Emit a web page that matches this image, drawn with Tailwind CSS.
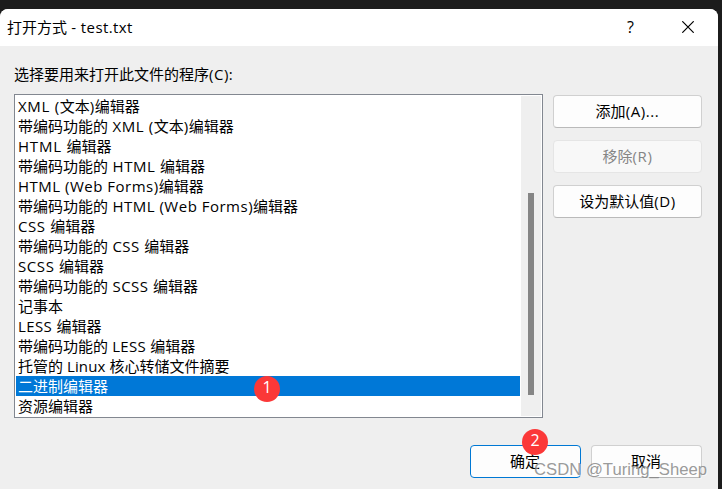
<!DOCTYPE html>
<html lang="zh-CN">
<head>
  <meta charset="UTF-8" />
  <meta name="viewport" content="width=device-width, initial-scale=1.0" />
  <title>打开方式 - test.txt</title>
  <script src="https://cdn.jsdelivr.net/npm/@tailwindcss/browser@4"></script>
</head>
<body class="h-[489px] overflow-hidden bg-[#1c1c1c] pt-[9px] pr-[4px] font-['Open_Sans','Noto_Sans_CJK_SC',sans-serif] text-[15px] leading-5 text-black">
  <div class="flex h-[480px] flex-col overflow-hidden rounded-t-lg bg-[#efefef]">

    <!-- 标题栏 -->
    <div class="flex h-[37px] shrink-0 items-center bg-white pr-0.5 pb-px pl-[7px]">
      <h1 class="flex-1 whitespace-nowrap">打开方式<span class="tracking-[.4px]"> - test.txt</span></h1>
      <button class="flex h-full w-[57px] items-center justify-center text-base">?</button>
      <button class="flex h-full w-[57px] items-center justify-center">
        <svg class="h-3 w-3" viewBox="0 0 12 12" fill="none" stroke="#000" stroke-width="1.2"><path d="M.3.3l11.4 11.4M11.7.3L.3 11.7" /></svg>
      </button>
    </div>

    <p class="mt-[18px] ml-[14px] whitespace-nowrap">选择要用来打开此文件的程序<span class="tracking-[.5px]">(C):</span></p>

    <div class="mt-[10px] flex gap-[10px] pl-[14px]">
      <!-- 程序列表 -->
      <div class="flex h-[324px] w-[529px] border border-[#828790] bg-white p-px">
        <ul id="list" class="w-[504px] whitespace-nowrap">
          <li class="h-5 pl-0.5"><span class="tracking-[.7px]">XML (</span>文本<span class="tracking-[.5px]">)</span>编辑器</li>
          <li class="h-5 pl-0.5">带编码功能的<span class="tracking-[.6px]"> XML (</span>文本<span class="tracking-[.5px]">)</span>编辑器</li>
          <li class="h-5 pl-0.5"><span class="tracking-[.8px]">HTML </span>编辑器</li>
          <li class="h-5 pl-0.5">带编码功能的<span class="tracking-[.6px]"> HTML </span>编辑器</li>
          <li class="h-5 pl-0.5"><span class="tracking-[.5px]">HTML (Web Forms)</span>编辑器</li>
          <li class="h-5 pl-0.5">带编码功能的<span class="tracking-[.5px]"> HTML (Web Forms)</span>编辑器</li>
          <li class="h-5 pl-0.5"><span class="tracking-[.6px]">CSS </span>编辑器</li>
          <li class="h-5 pl-0.5">带编码功能的<span class="tracking-[.5px]"> CSS </span>编辑器</li>
          <li class="h-5 pl-0.5"><span class="tracking-[.6px]">SCSS </span>编辑器</li>
          <li class="h-5 pl-0.5">带编码功能的<span class="tracking-[.5px]"> SCSS </span>编辑器</li>
          <li class="h-5 pl-0.5">记事本</li>
          <li class="h-5 pl-0.5"><span class="tracking-[.4px]">LESS </span>编辑器</li>
          <li class="h-5 pl-0.5">带编码功能的<span class="tracking-[.3px]"> LESS </span>编辑器</li>
          <li class="h-5 pl-0.5">托管的<span class="tracking-[.1px]"> Linux </span>核心转储文件摘要</li>
          <li class="relative h-5 bg-[#0078d7] pl-0.5 text-white">二进制编辑器
            <span class="absolute top-0 left-[238px] flex h-[26px] w-[26px] items-center justify-center rounded-full bg-[#fb3838] pb-1 text-base text-white">1</span>
          </li>
          <li class="h-5 pl-0.5">资源编辑器</li>
        </ul>
        <!-- 滚动条 -->
        <div class="ml-px flex w-5 justify-center bg-[#efefef] pt-[97px]">
          <div class="h-[202px] w-1.5 bg-[#858585]"></div>
        </div>
      </div>

      <div class="flex w-[149px] flex-col gap-3 pt-px">
        <button class="h-[33px] rounded border border-[#d0d0d0] border-b-[#bababa] bg-[#fdfdfd] pb-0.5">添加<span class="tracking-[.6px]">(A)...</span></button>
        <button class="h-[33px] rounded border border-[#e5e5e5] bg-[#f8f8f8] pb-0.5 text-[#858585]" disabled>移除<span class="tracking-[.6px]">(R)</span></button>
        <button class="h-[33px] rounded border border-[#d0d0d0] border-b-[#bababa] bg-[#fdfdfd] pb-0.5">设为默认值<span class="tracking-[.6px]">(D)</span></button>
      </div>
    </div>

    <!-- 底部按钮 -->
    <div class="relative mt-[27px] flex justify-end gap-[10px] pr-4">
      <button class="relative h-[33px] w-[111px] rounded border border-[#0078d4] bg-[#fdfdfd] pr-px pb-0.5">确定
        <span class="absolute -top-[17px] left-[51px] flex h-[26px] w-[26px] items-center justify-center rounded-full bg-[#fb3838] pb-1 text-base text-white">2</span>
      </button>
      <button class="h-[33px] w-[111px] rounded border border-[#d0d0d0] border-b-[#bababa] bg-[#fdfdfd] pr-px pb-0.5">取消</button>
      <!-- 水印 -->
      <span class="absolute top-[15px] left-[534px] font-['Liberation_Sans',sans-serif] text-[16.7px] whitespace-nowrap text-[#808080]/80 text-shadow-[1px_1px_0_#ffffff80]">CSDN @Turing_Sheep</span>
    </div>
  </div>
</body>
</html>
